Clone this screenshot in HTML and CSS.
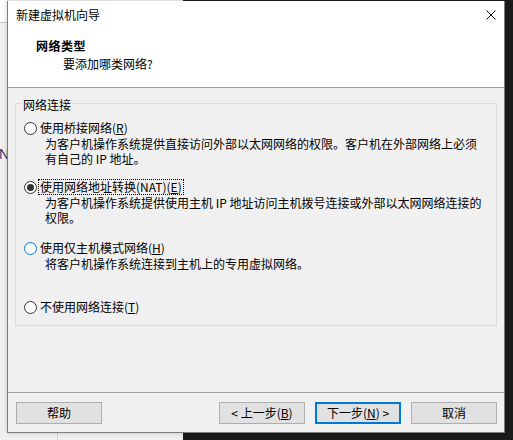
FILE: index.html
```html
<!DOCTYPE html>
<html lang="zh-CN">
<head>
<meta charset="utf-8">
<title>新建虚拟机向导</title>
<link rel="stylesheet" href="styles.css">
</head>
<body>
<span class="behind-glyph">N</span>
<div class="window">
  <div class="header">
    <div class="titlebar">
      <span class="title">新建虚拟机向导</span>
      <svg class="close" width="10" height="10" viewBox="0 0 10 10"><path d="M0.5 0.5 L9.5 9.5 M9.5 0.5 L0.5 9.5" stroke="#000" stroke-width="1" fill="none"/></svg>
    </div>
    <div class="heading">网络类型</div>
    <div class="subheading">要添加哪类网络?</div>
  </div>
  <div class="content">
    <fieldset class="group">
      <legend>网络连接</legend>
      <div class="options">
        <div class="option">
          <div class="option-label"><span class="radio"></span><span class="label">使用桥接网络(<u>R</u>)</span></div>
          <p class="desc">为客户机操作系统提供直接访问外部以太网网络的权限。客户机在外部网络上必须<br>有自己的 IP 地址。</p>
        </div>
        <div class="option">
          <div class="option-label"><span class="radio checked"></span><span class="label focused">使用网络地址转换(NAT)(<u>E</u>)</span></div>
          <p class="desc">为客户机操作系统提供使用主机 IP 地址访问主机拨号连接或外部以太网网络连接的<br>权限。</p>
        </div>
        <div class="option">
          <div class="option-label"><span class="radio hover"></span><span class="label">使用仅主机模式网络(<u>H</u>)</span></div>
          <p class="desc">将客户机操作系统连接到主机上的专用虚拟网络。</p>
        </div>
        <div class="option">
          <div class="option-label"><span class="radio"></span><span class="label">不使用网络连接(<u>T</u>)</span></div>
        </div>
      </div>
    </fieldset>
  </div>
  <div class="footer">
    <button class="btn">帮助</button>
    <div class="spacer"></div>
    <button class="btn">&lt; 上一步(<u>B</u>)</button>
    <button class="btn primary">下一步(<u>N</u>) &gt;</button>
    <button class="btn">取消</button>
  </div>
</div>
</body>
</html>
```
FILE: styles.css
```css
html, body {
  margin: 0;
  padding: 0;
  width: 513px;
  height: 440px;
  overflow: hidden;
}

body {
  position: relative;
  font-family: "Noto Sans CJK SC", "Noto Sans", sans-serif;
  font-size: 12px;
  color: #000;
  background:
    linear-gradient(#1b1b1b, #1b1b1b) 505px 0 / 8px 100% no-repeat,
    linear-gradient(#1b1b1b, #1b1b1b) 183px 433px / 330px 7px no-repeat,
    linear-gradient(#1b1b1b, #1b1b1b) 183px 0 / 330px 1px no-repeat,
    linear-gradient(#d4d4d4, #d4d4d4) 57px 433px / 1px 7px no-repeat,
    linear-gradient(#c8c8c8, #c8c8c8) 0 22px / 7px 1px no-repeat,
    linear-gradient(#ffffff, #ffffff) 0 0 / 7px 22px no-repeat,
    #f0f0f0;
}

.behind-glyph {
  position: absolute;
  left: -1px;
  top: 146px;
  font-family: "Liberation Sans", sans-serif;
  font-size: 14px;
  color: #1f3a6e;
  z-index: 0;
}

.window {
  position: relative;
  z-index: 1;
  margin: 1px 0 0 7px;
  width: 498px;
  height: 432px;
  box-sizing: border-box;
  border: 1px solid #7d7d7d;
  border-top: none;
  background: #f0f0f0;
  display: flex;
  flex-direction: column;
  box-shadow: 0 0 5px rgba(0, 0, 0, 0.18);
}

.header {
  background: #fff;
  height: 86px;
  border-bottom: 1px solid #a0a0a0;
  flex: none;
}

.titlebar {
  display: flex;
  justify-content: space-between;
  align-items: center;
  padding: 6px 8px 0 8px;
  height: 16px;
  line-height: 16px;
}

.close {
  display: block;
}

.heading {
  margin-top: 15px;
  padding-left: 28px;
  font-weight: bold;
  line-height: 16px;
  letter-spacing: 0.5px;
}

.subheading {
  margin-top: 2px;
  padding-left: 55px;
  line-height: 16px;
}

.content {
  flex: 1;
  border-bottom: 1px solid #a0a0a0;
  padding: 0 7px;
}

.group {
  margin: 5px 0 0 0;
  border: 1px solid #dcdcdc;
  padding: 0 0 10px 0;
  min-width: 0;
}

.group legend {
  margin-left: 6px;
  padding: 4px 1px 0 1px;
  line-height: 16px;
}

.options {
  padding-top: 7px;
  display: grid;
  grid-template-rows: 59px 61px 59px 16px;
}

.option-label {
  display: flex;
  align-items: center;
  height: 16px;
  padding-left: 8px;
}

.radio {
  position: relative;
  width: 13px;
  height: 13px;
  box-sizing: border-box;
  border: 1px solid #333;
  border-radius: 50%;
  background: #fff;
  flex: none;
}

.radio.hover {
  border-color: #0078d7;
}

.radio.checked::after {
  content: "";
  position: absolute;
  left: 2px;
  top: 2px;
  width: 7px;
  height: 7px;
  border-radius: 50%;
  background: #333;
}

.label {
  margin-left: 1px;
  padding: 0 1px;
  border: 1px solid transparent;
  line-height: 14px;
  white-space: nowrap;
}

.label.focused {
  border: 1px dotted #000;
}

u {
  text-decoration: underline;
  text-underline-offset: 1px;
}

.desc {
  margin: 0;
  padding-left: 29px;
  line-height: 15px;
  white-space: nowrap;
}

.footer {
  flex: none;
  display: flex;
  gap: 10px;
  padding: 9px 7px 8px 8px;
}

.spacer {
  flex: 1;
}

.btn {
  width: 86px;
  height: 22px;
  box-sizing: border-box;
  padding: 0;
  font-family: inherit;
  font-size: 12px;
  color: #000;
  background: #e1e1e1;
  border: 1px solid #adadad;
  border-radius: 0;
  line-height: 18px;
}

.btn.primary {
  border: 2px solid #0078d7;
}
```
